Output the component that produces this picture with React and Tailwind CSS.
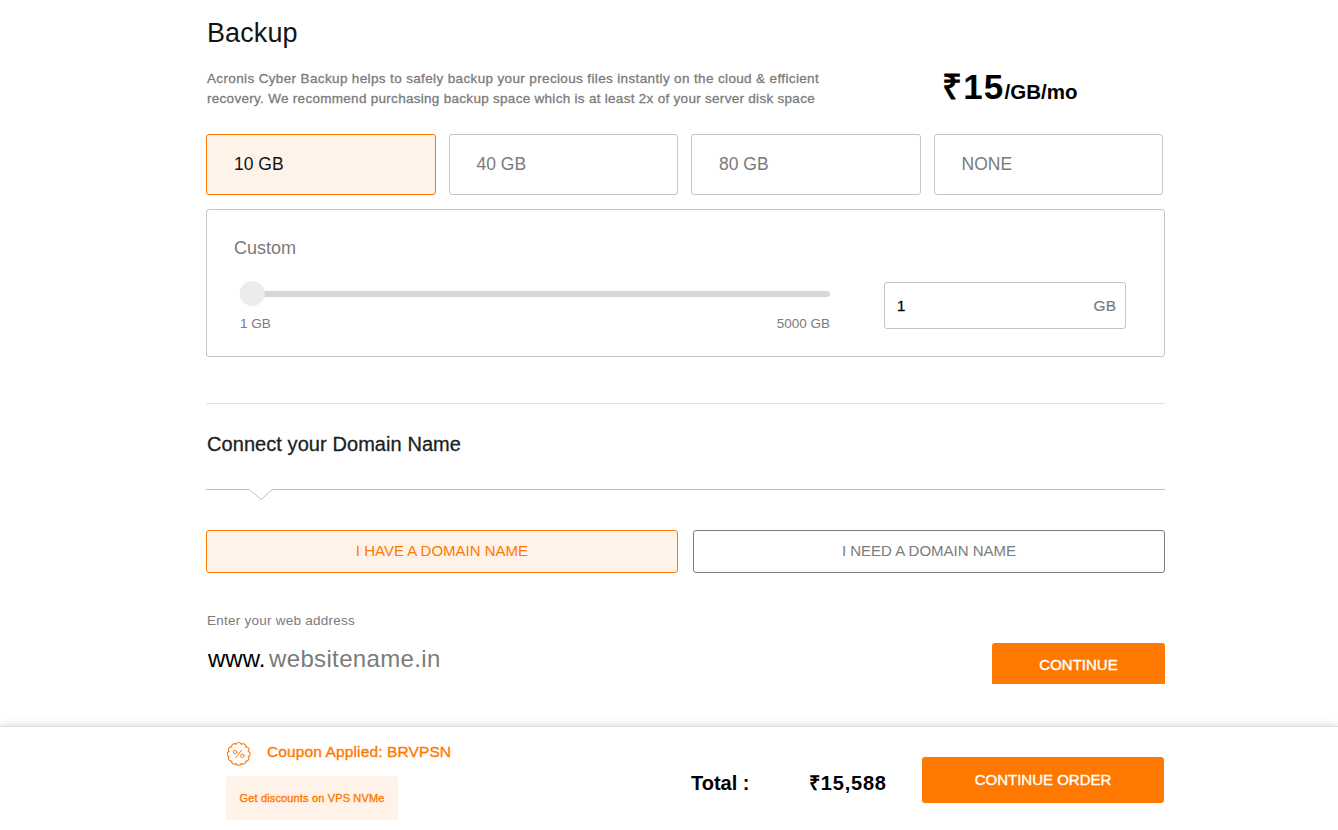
import { useState } from 'react'
import * as Slider from '@radix-ui/react-slider'

const plans = ['10 GB', '40 GB', '80 GB', 'NONE']

function CouponIcon() {
  return (
    <svg className="mt-px -ml-px" width="24" height="24" viewBox="-.5 -.5 25 25" fill="none" stroke="#ff7800" strokeLinecap="round" strokeLinejoin="round">
      <path strokeWidth="1.1" d="M9 2A2.800 2.800 0 0 1 14.300 2A2.800 2.800 0 0 1 18.900 4.700A2.800 2.800 0 0 1 21.600 9.300A2.800 2.800 0 0 1 21.600 14.700A2.800 2.800 0 0 1 18.900 19.300A2.800 2.800 0 0 1 14.300 21.900A2.800 2.800 0 0 1 9 21.900A2.800 2.800 0 0 1 4.400 19.300A2.800 2.800 0 0 1 1.700 14.700A2.800 2.800 0 0 1 1.700 9.300A2.800 2.800 0 0 1 4.400 4.700A2.800 2.800 0 0 1 9 2Z" />
      <path d="M14.700 8 8.500 16" />
      <circle cx="7.900" cy="10" r="1.800" />
      <circle cx="15.400" cy="13.800" r="1.800" />
    </svg>
  )
}

export default function App() {
  const [plan, setPlan] = useState('10 GB')
  const [size, setSize] = useState(1)
  const [hasDomain, setHasDomain] = useState(true)

  return (
    <div className="h-[830px] overflow-hidden bg-white font-['Liberation_Sans',Arial,sans-serif] text-[#7b7b7b]">
      <main className="ml-[206px] h-[726px] w-[959px] pt-[17px]">
        <h1 className="pl-px text-[27px] leading-8 tracking-[0.1px] text-[#141414]">Backup</h1>

        <div className="mt-[19px] flex h-[66px]">
          <p className="w-[736px] whitespace-nowrap pl-px pt-px text-[13.5px] leading-5 tracking-[0.36px] [-webkit-text-stroke:0.3px]">
            Acronis Cyber Backup helps to safely backup your precious files instantly on the cloud &amp; efficient<br />
            <span className="tracking-[0.29px]">recovery. We recommend purchasing backup space which is at least 2x of your server disk space</span>
          </p>
          <div className="whitespace-nowrap font-bold leading-[38px] text-black">
            <span className="text-[35px] tracking-[1.2px]">₹15</span>
            <span className="text-[20.5px]">/GB/mo</span>
          </div>
        </div>

        <div className="grid w-[957px] grid-cols-4 gap-[13px]">
          {plans.map(p => (
            <button key={p} onClick={() => setPlan(p)}
              className={`h-[61px] rounded-[3px] border pl-[27px] text-left text-[17.5px] ${plan === p ? 'border-[#ff7800] bg-[#fff3e9] text-[#141414]' : 'border-[#c4c4c8]'}`}>
              {p}
            </button>
          ))}
        </div>

        {/* Custom size */}
        <section className="mt-[14px] flex h-[148px] rounded-[3px] border border-[#c4c4c8]">
          <div className="w-[677px] pl-[27px] pt-[26px]">
            <h2 className="text-[18px] leading-6">Custom</h2>
            <Slider.Root min={1} max={5000} value={[size]} onValueChange={([v]) => setSize(v)}
              className="relative ml-[6px] mt-[21px] flex h-[25px] w-[590px] items-center">
              <Slider.Track className="h-[6px] grow rounded-full bg-[#d6d6db]" />
              <Slider.Thumb aria-label="Backup size" className="-ml-[0.5px] block size-[25px] rounded-full bg-[#ebecee] outline-none" />
            </Slider.Root>
            <div className="ml-[6px] mt-[8px] flex w-[590px] justify-between text-[13.5px] leading-5">
              <span>1 GB</span>
              <span>5000 GB</span>
            </div>
          </div>
          <label className="mt-[72px] flex h-[47px] w-[242px] items-center justify-between rounded-[3px] border border-[#c4c4c8] px-[9px] text-[15.5px]">
            <input value={size} onChange={e => setSize(Number(e.target.value) || 1)}
              className="w-32 pl-[3px] pt-[2px] text-[15px] text-black outline-none [-webkit-text-stroke:0.3px]" />
            <span className="[-webkit-text-stroke:0.2px]">GB</span>
          </label>
        </section>

        <hr className="mt-[46px] border-[#e2e2e2]" />

        {/* Domain */}
        <h2 className="mt-[26px] pl-px text-[20px] leading-7 tracking-[0.07px] text-[#1c1f23] [-webkit-text-stroke:0.3px]">Connect your Domain Name</h2>
        <svg className="mt-[31px] block" width="959" height="12" fill="none" stroke="#bfbfc3">
          <path d="M0 .5H43.500L55 10.500 66.500.5H959" />
        </svg>

        <div className="mt-[29px] grid grid-cols-2 gap-[15px] text-[15px]">
          <button onClick={() => setHasDomain(true)}
            className={`h-[43px] rounded-[3px] border ${hasDomain ? 'border-[#ff7800] bg-[#fff3e9] text-[#ff7800]' : 'border-[#7b7b7b]'}`}>
            I HAVE A DOMAIN NAME
          </button>
          <button onClick={() => setHasDomain(false)}
            className={`h-[43px] rounded-[3px] border ${hasDomain ? 'border-[#7b7b7b]' : 'border-[#ff7800] bg-[#fff3e9] text-[#ff7800]'}`}>
            I NEED A DOMAIN NAME
          </button>
        </div>

        <div className="mt-[38px] flex justify-between">
          <div className="pl-px">
            <p className="text-[13.5px] leading-5 tracking-[0.25px]">Enter your web address</p>
            <div className="mt-[12px] flex pl-px text-[24px] leading-8">
              <span className="w-[61px] text-black">www.</span>
              <input placeholder="websitename.in" className="h-8 w-80 tracking-[0.35px] outline-none placeholder:text-[#7b7b7b]" />
            </div>
          </div>
          <button className="mt-[32px] h-[41px] w-[173px] rounded-t-[3px] bg-[#ff7800] pt-[3px] text-[15px] text-white [-webkit-text-stroke:0.4px]">CONTINUE</button>
        </div>
      </main>

      <footer className="flex h-[104px] border-t border-[#dfdfdf] bg-white pl-[226px] shadow-[0_-1px_8px_rgba(0,0,0,0.14)]">
        <div className="w-[465px] pt-[14px] text-[#ff7800] [-webkit-text-stroke:0.35px]">
          <div className="flex h-[35px] pl-[2px]">
            <CouponIcon />
            <span className="pl-[16px] text-[15.5px] leading-[22px] tracking-[0.12px]">Coupon Applied: BRVPSN</span>
          </div>
          <div className="flex h-[44px] w-[172px] items-center justify-center rounded-[3px] bg-[#fff3e9] text-[11px] tracking-[0.15px]">Get discounts on VPS NVMe</div>
        </div>
        <div className="w-[118px] pt-[42px] text-[20px] font-bold leading-7 text-black">Total :</div>
        <div className="w-[113px] pt-[42px] text-[20px] font-bold leading-7 tracking-[0.8px] text-black">₹15,588</div>
        <button className="mt-[30px] h-[46px] w-[242px] rounded-[3px] bg-[#ff7800] text-[15px] text-white [-webkit-text-stroke:0.4px]">CONTINUE ORDER</button>
      </footer>
    </div>
  )
}
